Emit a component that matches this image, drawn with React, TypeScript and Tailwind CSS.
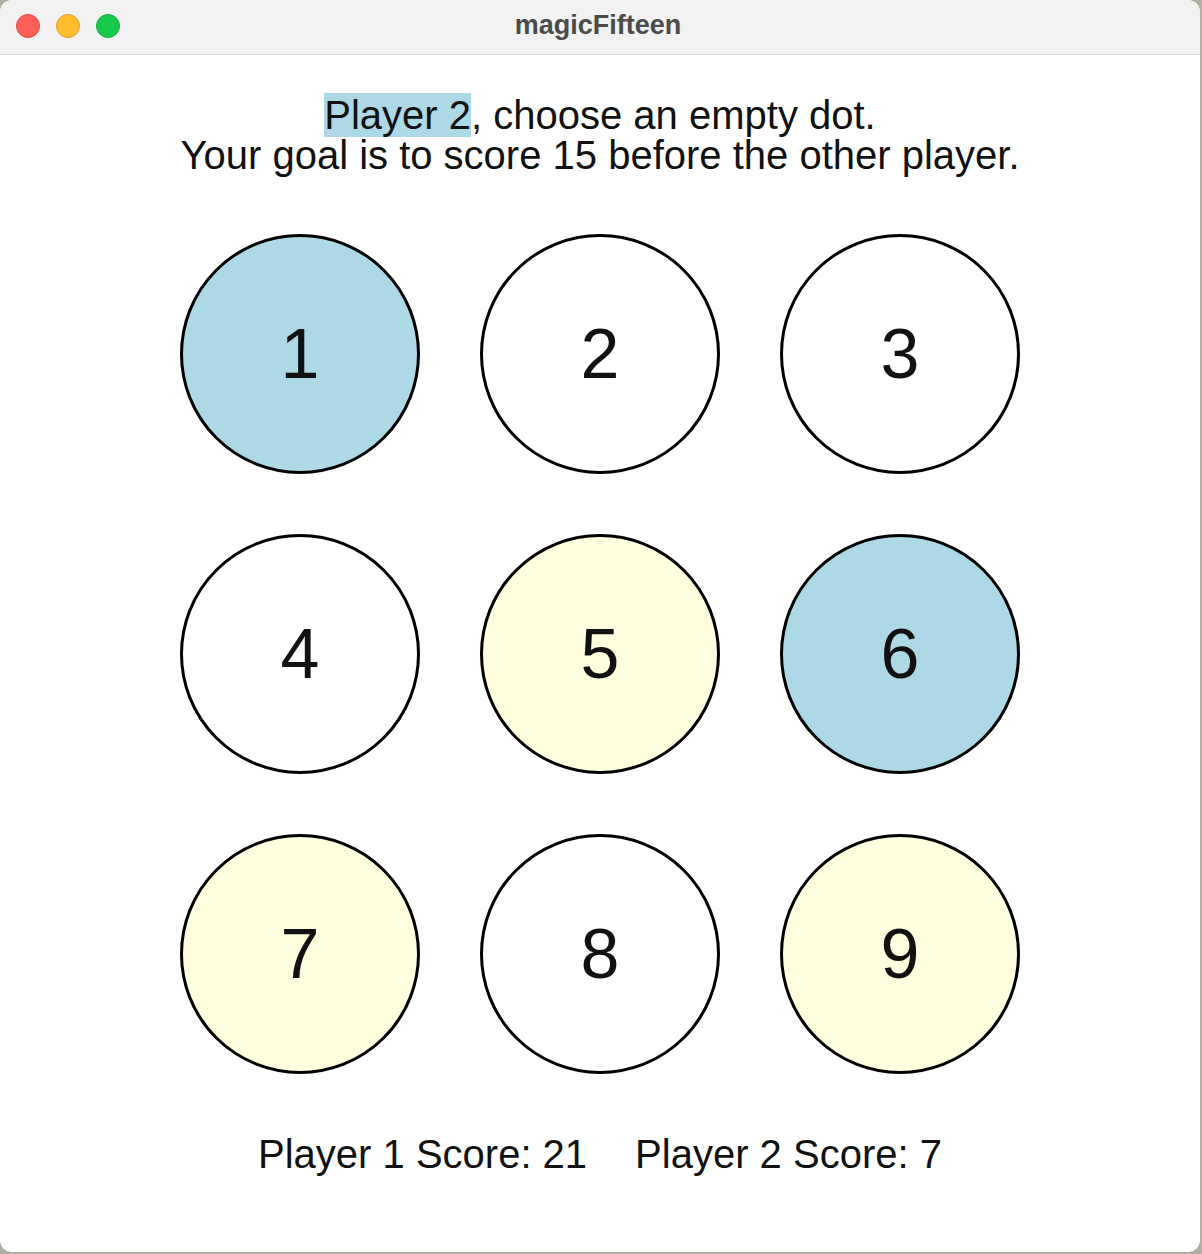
import React from 'react';

type Dot = { n: number; owner: 0 | 1 | 2 };

const dots: Dot[] = [
  { n: 1, owner: 1 },
  { n: 2, owner: 0 },
  { n: 3, owner: 0 },
  { n: 4, owner: 0 },
  { n: 5, owner: 2 },
  { n: 6, owner: 1 },
  { n: 7, owner: 2 },
  { n: 8, owner: 0 },
  { n: 9, owner: 2 },
];

const fills = ['bg-white', 'bg-[#add8e6]', 'bg-[#ffffe0]'];

function TitleBar() {
  return (
    <div className="relative h-[55px] bg-[#f1f2f1] border-b border-[#d6d6d6] rounded-t-[12px] flex items-center justify-center">
      <div className="absolute left-[16px] top-[14px] flex gap-[16px]">
        <span className="w-[24px] h-[24px] rounded-full bg-[#fe5f57] border border-[#e2463f]" />
        <span className="w-[24px] h-[24px] rounded-full bg-[#febc2e] border border-[#e1a116]" />
        <span className="w-[24px] h-[24px] rounded-full bg-[#19c94c] border border-[#12ac3a]" />
      </div>
      <h1 className="font-['Liberation_Sans',Arial,sans-serif] font-bold text-[27px] text-[#4b4b4b] -ml-[4px] -mt-[3px]">
        magicFifteen
      </h1>
    </div>
  );
}

export default function App() {
  return (
    <div className="w-[1202px] h-[1254px] bg-[#b3ada2]">
      <div className="w-[1200px] h-[1252px] bg-white rounded-[12px] overflow-hidden flex flex-col font-['Liberation_Sans',Arial,sans-serif] text-[#111]">
        <TitleBar />
        <div className="flex flex-col items-center pt-[40px]">
          <div className="text-center text-[40px] leading-[40px]">
            <p>
              <span className="bg-[#add8e6]">Player 2</span>, choose an empty dot.
            </p>
            <p>Your goal is to score 15 before the other player.</p>
          </div>

          <div className="grid grid-cols-3 gap-[60px] mt-[59px]">
            {dots.map((d) => (
              <div
                key={d.n}
                className={`w-[240px] h-[240px] rounded-full border-[3px] border-black flex items-center justify-center text-[70px] leading-none ${fills[d.owner]}`}
              >
                {d.n}
              </div>
            ))}
          </div>

          <div className="flex gap-[48px] mt-[60px] text-[40px] leading-[40px]">
            <span>Player 1 Score: 21</span>
            <span>Player 2 Score: 7</span>
          </div>
        </div>
      </div>
    </div>
  );
}
